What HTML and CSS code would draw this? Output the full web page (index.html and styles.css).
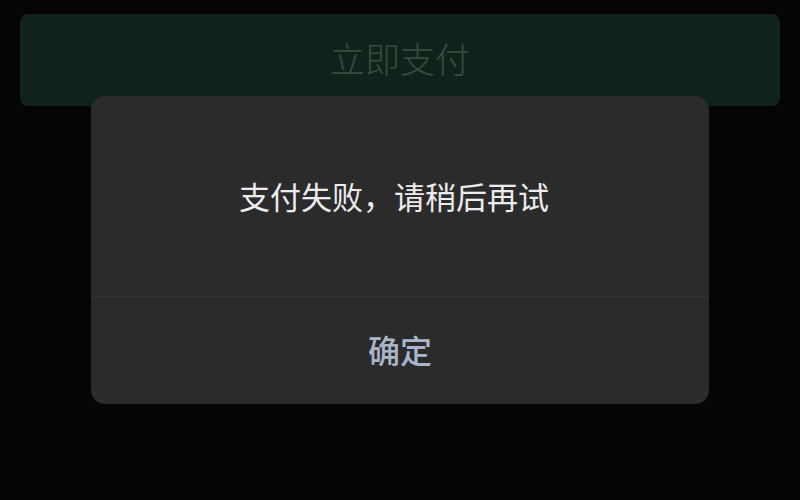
FILE: index.html
```html
<!DOCTYPE html>
<html lang="zh-CN">
<head>
<meta charset="utf-8">
<title>支付</title>
<link rel="stylesheet" href="styles.css">
</head>
<body>
  <main class="screen">
    <button class="pay-btn" type="button">立即支付</button>

    <div class="dialog" role="alertdialog">
      <p class="dialog-msg">支付失败，请稍后再试</p>
      <div class="dialog-actions">
        <button class="dialog-ok" type="button">确定</button>
      </div>
    </div>
  </main>
</body>
</html>
```

FILE: styles.css
```css
* {
  box-sizing: border-box;
}

html, body {
  margin: 0;
  height: 100%;
  background: #050505;
}

body {
  font-family: "Noto Sans CJK SC", "Noto Sans", sans-serif;
}

.screen {
  position: relative;
  width: 800px;
  height: 500px;
  padding: 14px 20px 0 20px;
}

.pay-btn {
  display: flex;
  align-items: center;
  justify-content: center;
  width: 100%;
  height: 92px;
  border: 0;
  border-radius: 8px;
  background: #10231a;
  color: #3a4b3f;
  font-family: inherit;
  font-size: 35px;
  font-weight: 300;
  padding: 0 0 6px 0;
}

/* alert dialog sits on top of the page */
.dialog {
  position: absolute;
  left: 91px;
  top: 96px;
  width: 618px;
  height: 308px;
  border-radius: 14px;
  background: #2b2b2b;
  display: flex;
  flex-direction: column;
}

.dialog-msg {
  margin: 0;
  height: 201px;
  display: flex;
  align-items: center;
  justify-content: center;
  padding: 0 12px 1px 0;
  color: #ececec;
  font-size: 31px;
  font-weight: 400;
  border-bottom: 1px solid #353535;
}

.dialog-actions {
  flex: 1;
  display: flex;
}

.dialog-ok {
  flex: 1;
  border: 0;
  background: transparent;
  color: #a9b5c8;
  font-family: inherit;
  font-size: 32px;
  font-weight: 500;
  padding: 0 0 4px 0;
}
```
